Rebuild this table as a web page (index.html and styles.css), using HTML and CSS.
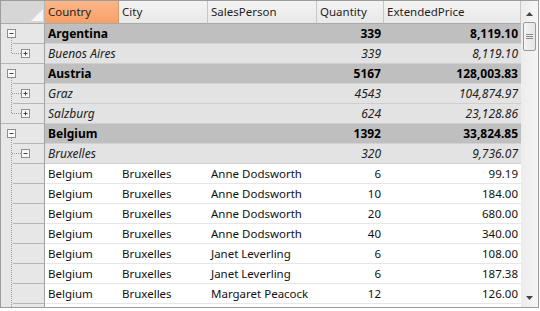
FILE: index.html
```html
<!DOCTYPE html>
<html>
<head>
<meta charset="utf-8">
<link rel="stylesheet" href="styles.css">
</head>
<body>
<div class="grid">
  <div class="main">
    <div class="row hdr">
      <div class="h sel"><svg width="43" height="22" viewBox="0 0 43 22"><polygon points="42,8 42,20 30,20" fill="#f6f6f6"/></svg></div>
      <div class="h sorted">Country</div>
      <div class="h">City</div>
      <div class="h">SalesPerson</div>
      <div class="h">Quantity</div>
      <div class="h">ExtendedPrice</div>
    </div>

    <div class="row g1">
      <div class="sel"><svg width="43" height="20" viewBox="0 0 43 20"><path d="M12 19.5H43" stroke="#b5b5b5"/><path d="M10.5 14V20" stroke="#9a9a9a" stroke-dasharray="1 1"/><rect x="6.5" y="5.5" width="8" height="8" fill="#fafafa" stroke="#8f8f8f"/><path d="M8.5 9.5H12.5" stroke="#444"/></svg></div>
      <div class="lbl">Argentina</div><div class="num">339</div><div class="num">8,119.10</div>
    </div>
    <div class="row g2">
      <div class="sel"><svg width="43" height="20" viewBox="0 0 43 20"><path d="M0 19.5H43" stroke="#b5b5b5"/><path d="M10.5 0V10M11 9.5H20" stroke="#9a9a9a" stroke-dasharray="1 1"/><rect x="20.5" y="5.5" width="8" height="8" fill="#fafafa" stroke="#8f8f8f"/><path d="M22.5 9.5H26.5M24.5 7.5V11.5" stroke="#444"/></svg></div>
      <div class="lbl">Buenos Aires</div><div class="num">339</div><div class="num">8,119.10</div>
    </div>

    <div class="row g1">
      <div class="sel"><svg width="43" height="20" viewBox="0 0 43 20"><path d="M12 19.5H43" stroke="#b5b5b5"/><path d="M10.5 14V20" stroke="#9a9a9a" stroke-dasharray="1 1"/><rect x="6.5" y="5.5" width="8" height="8" fill="#fafafa" stroke="#8f8f8f"/><path d="M8.5 9.5H12.5" stroke="#444"/></svg></div>
      <div class="lbl">Austria</div><div class="num">5167</div><div class="num">128,003.83</div>
    </div>
    <div class="row g2">
      <div class="sel"><svg width="43" height="20" viewBox="0 0 43 20"><path d="M12 19.5H43" stroke="#b5b5b5"/><path d="M10.5 0V20M11 9.5H20" stroke="#9a9a9a" stroke-dasharray="1 1"/><rect x="20.5" y="5.5" width="8" height="8" fill="#fafafa" stroke="#8f8f8f"/><path d="M22.5 9.5H26.5M24.5 7.5V11.5" stroke="#444"/></svg></div>
      <div class="lbl">Graz</div><div class="num">4543</div><div class="num">104,874.97</div>
    </div>
    <div class="row g2">
      <div class="sel"><svg width="43" height="20" viewBox="0 0 43 20"><path d="M0 19.5H43" stroke="#b5b5b5"/><path d="M10.5 0V10M11 9.5H20" stroke="#9a9a9a" stroke-dasharray="1 1"/><rect x="20.5" y="5.5" width="8" height="8" fill="#fafafa" stroke="#8f8f8f"/><path d="M22.5 9.5H26.5M24.5 7.5V11.5" stroke="#444"/></svg></div>
      <div class="lbl">Salzburg</div><div class="num">624</div><div class="num">23,128.86</div>
    </div>

    <div class="row g1">
      <div class="sel"><svg width="43" height="20" viewBox="0 0 43 20"><path d="M12 19.5H43" stroke="#b5b5b5"/><path d="M10.5 14V20" stroke="#9a9a9a" stroke-dasharray="1 1"/><rect x="6.5" y="5.5" width="8" height="8" fill="#fafafa" stroke="#8f8f8f"/><path d="M8.5 9.5H12.5" stroke="#444"/></svg></div>
      <div class="lbl">Belgium</div><div class="num">1392</div><div class="num">33,824.85</div>
    </div>
    <div class="row g2">
      <div class="sel"><svg width="43" height="20" viewBox="0 0 43 20"><path d="M12 19.5H43" stroke="#b5b5b5"/><path d="M10.5 0V20M11 9.5H20" stroke="#9a9a9a" stroke-dasharray="1 1"/><rect x="20.5" y="5.5" width="8" height="8" fill="#fafafa" stroke="#8f8f8f"/><path d="M22.5 9.5H26.5" stroke="#444"/></svg></div>
      <div class="lbl">Bruxelles</div><div class="num">320</div><div class="num">9,736.07</div>
    </div>

    <div class="row d">
      <div class="sel"><svg width="43" height="20" viewBox="0 0 43 20"><path d="M12 19.5H43" stroke="#b5b5b5"/><path d="M10.5 0V20" stroke="#9a9a9a" stroke-dasharray="1 1"/></svg></div>
      <div class="c">Belgium</div><div class="c">Bruxelles</div><div class="c">Anne Dodsworth</div><div class="num">6</div><div class="num">99.19</div>
    </div>
    <div class="row d">
      <div class="sel"><svg width="43" height="20" viewBox="0 0 43 20"><path d="M12 19.5H43" stroke="#b5b5b5"/><path d="M10.5 0V20" stroke="#9a9a9a" stroke-dasharray="1 1"/></svg></div>
      <div class="c">Belgium</div><div class="c">Bruxelles</div><div class="c">Anne Dodsworth</div><div class="num">10</div><div class="num">184.00</div>
    </div>
    <div class="row d">
      <div class="sel"><svg width="43" height="20" viewBox="0 0 43 20"><path d="M12 19.5H43" stroke="#b5b5b5"/><path d="M10.5 0V20" stroke="#9a9a9a" stroke-dasharray="1 1"/></svg></div>
      <div class="c">Belgium</div><div class="c">Bruxelles</div><div class="c">Anne Dodsworth</div><div class="num">20</div><div class="num">680.00</div>
    </div>
    <div class="row d">
      <div class="sel"><svg width="43" height="20" viewBox="0 0 43 20"><path d="M12 19.5H43" stroke="#b5b5b5"/><path d="M10.5 0V20" stroke="#9a9a9a" stroke-dasharray="1 1"/></svg></div>
      <div class="c">Belgium</div><div class="c">Bruxelles</div><div class="c">Anne Dodsworth</div><div class="num">40</div><div class="num">340.00</div>
    </div>
    <div class="row d">
      <div class="sel"><svg width="43" height="20" viewBox="0 0 43 20"><path d="M12 19.5H43" stroke="#b5b5b5"/><path d="M10.5 0V20" stroke="#9a9a9a" stroke-dasharray="1 1"/></svg></div>
      <div class="c">Belgium</div><div class="c">Bruxelles</div><div class="c">Janet Leverling</div><div class="num">6</div><div class="num">108.00</div>
    </div>
    <div class="row d">
      <div class="sel"><svg width="43" height="20" viewBox="0 0 43 20"><path d="M12 19.5H43" stroke="#b5b5b5"/><path d="M10.5 0V20" stroke="#9a9a9a" stroke-dasharray="1 1"/></svg></div>
      <div class="c">Belgium</div><div class="c">Bruxelles</div><div class="c">Janet Leverling</div><div class="num">6</div><div class="num">187.38</div>
    </div>
    <div class="row d">
      <div class="sel"><svg width="43" height="20" viewBox="0 0 43 20"><path d="M12 19.5H43" stroke="#b5b5b5"/><path d="M10.5 0V20" stroke="#9a9a9a" stroke-dasharray="1 1"/></svg></div>
      <div class="c">Belgium</div><div class="c">Bruxelles</div><div class="c">Margaret Peacock</div><div class="num">12</div><div class="num">126.00</div>
    </div>
    <div class="row d">
      <div class="sel"><svg width="43" height="20" viewBox="0 0 43 20"><path d="M12 19.5H43" stroke="#b5b5b5"/><path d="M10.5 0V20" stroke="#9a9a9a" stroke-dasharray="1 1"/></svg></div>
      <div class="c"></div><div class="c"></div><div class="c"></div><div class="num"></div><div class="num"></div>
    </div>
  </div>
  <div class="vscroll">
    <div class="sb-btn top"><svg width="7" height="4" viewBox="0 0 7 4"><polygon points="0,4 7,4 3.5,0" fill="#444"/></svg></div>
    <div class="thumb"><svg width="7" height="6" viewBox="0 0 7 6"><path d="M0 0.5H7M0 2.5H7M0 4.5H7" stroke="#8a8a8a"/></svg></div>
    <div class="track"></div>
    <div class="sb-btn bottom"><svg width="7" height="4" viewBox="0 0 7 4"><polygon points="0,0 7,0 3.5,4" fill="#444"/></svg></div>
  </div>
</div>
</body>
</html>
```

FILE: styles.css
```css
html, body {
  margin: 0;
  padding: 0;
  background: #ffffff;
}

body {
  font-family: "Noto Sans", "DejaVu Sans", sans-serif;
  font-size: 11.5px;
  color: #000000;
}

.grid {
  width: 539px;
  height: 308px;
  box-sizing: border-box;
  border: 1px solid #9c9c9c;
  display: flex;
  overflow: hidden;
}

.main {
  width: 520px;
  overflow: hidden;
  display: flex;
  flex-direction: column;
}

.row {
  display: grid;
  grid-template-columns: 44px 74px 89px 109px 67px 137px;
  height: 20px;
  flex: none;
}

.row > div {
  box-sizing: border-box;
  height: 20px;
  line-height: 19px;
  white-space: nowrap;
  overflow: hidden;
}

.sel {
  background: #e7e7e7;
  border-right: 1px solid #a3a3a3;
}

.sel svg {
  display: block;
}

/* header */
.hdr {
  height: 23px;
}

.hdr > .h {
  height: 23px;
  line-height: 21px;
  padding-left: 3px;
  color: #1e1e1e;
  background: linear-gradient(#f3f3f3, #e8e8e8);
  border-right: 1px solid #c6c6c6;
  border-bottom: 1px solid #a9a9a9;
}

.hdr > .h.sel {
  padding-left: 0;
  background: #d6d6d6;
  border-right: 1px solid #b8b8b8;
}

.hdr > .h.sorted {
  background: linear-gradient(#fcb689, #f9a067);
  border-right: 1px solid #d99a70;
}

/* group level 1 */
.g1 > div:not(.sel) {
  background: #bfbfbf;
  font-weight: bold;
  font-size: 12px;
  border-bottom: 1px solid #d2d2d2;
}

/* group level 2 */
.g2 > div:not(.sel) {
  background: #e3e3e3;
  font-style: italic;
  font-size: 12px;
  color: #222222;
  border-bottom: 1px solid #cfcfcf;
}

.lbl {
  grid-column: span 3;
  padding-left: 3px;
}

/* data rows */
.d > div:not(.sel) {
  background: #ffffff;
  border-bottom: 1px solid #e6e6e6;
  color: #111111;
}

.c {
  padding-left: 3px;
}

.num {
  text-align: right;
  padding-right: 3px;
}

/* scrollbar */
.vscroll {
  width: 17px;
  display: flex;
  flex-direction: column;
  align-items: center;
  background: linear-gradient(90deg, #ececec, #f6f6f6);
}

.sb-btn {
  flex: none;
  width: 17px;
  display: flex;
  justify-content: center;
}

.sb-btn svg {
  display: block;
}

.sb-btn.top {
  height: 21px;
  align-items: flex-start;
  padding-top: 11px;
  box-sizing: border-box;
}

.sb-btn.bottom {
  height: 17px;
  align-items: flex-start;
  padding-top: 6px;
  box-sizing: border-box;
}

.thumb {
  flex: none;
  width: 13px;
  height: 29px;
  box-sizing: border-box;
  border: 1px solid #9b9b9b;
  border-radius: 2px;
  background: linear-gradient(90deg, #f4f4f4, #e4e4e4);
  display: flex;
  align-items: center;
  justify-content: center;
}

.thumb svg {
  display: block;
}

.track {
  flex: 1;
}
```
